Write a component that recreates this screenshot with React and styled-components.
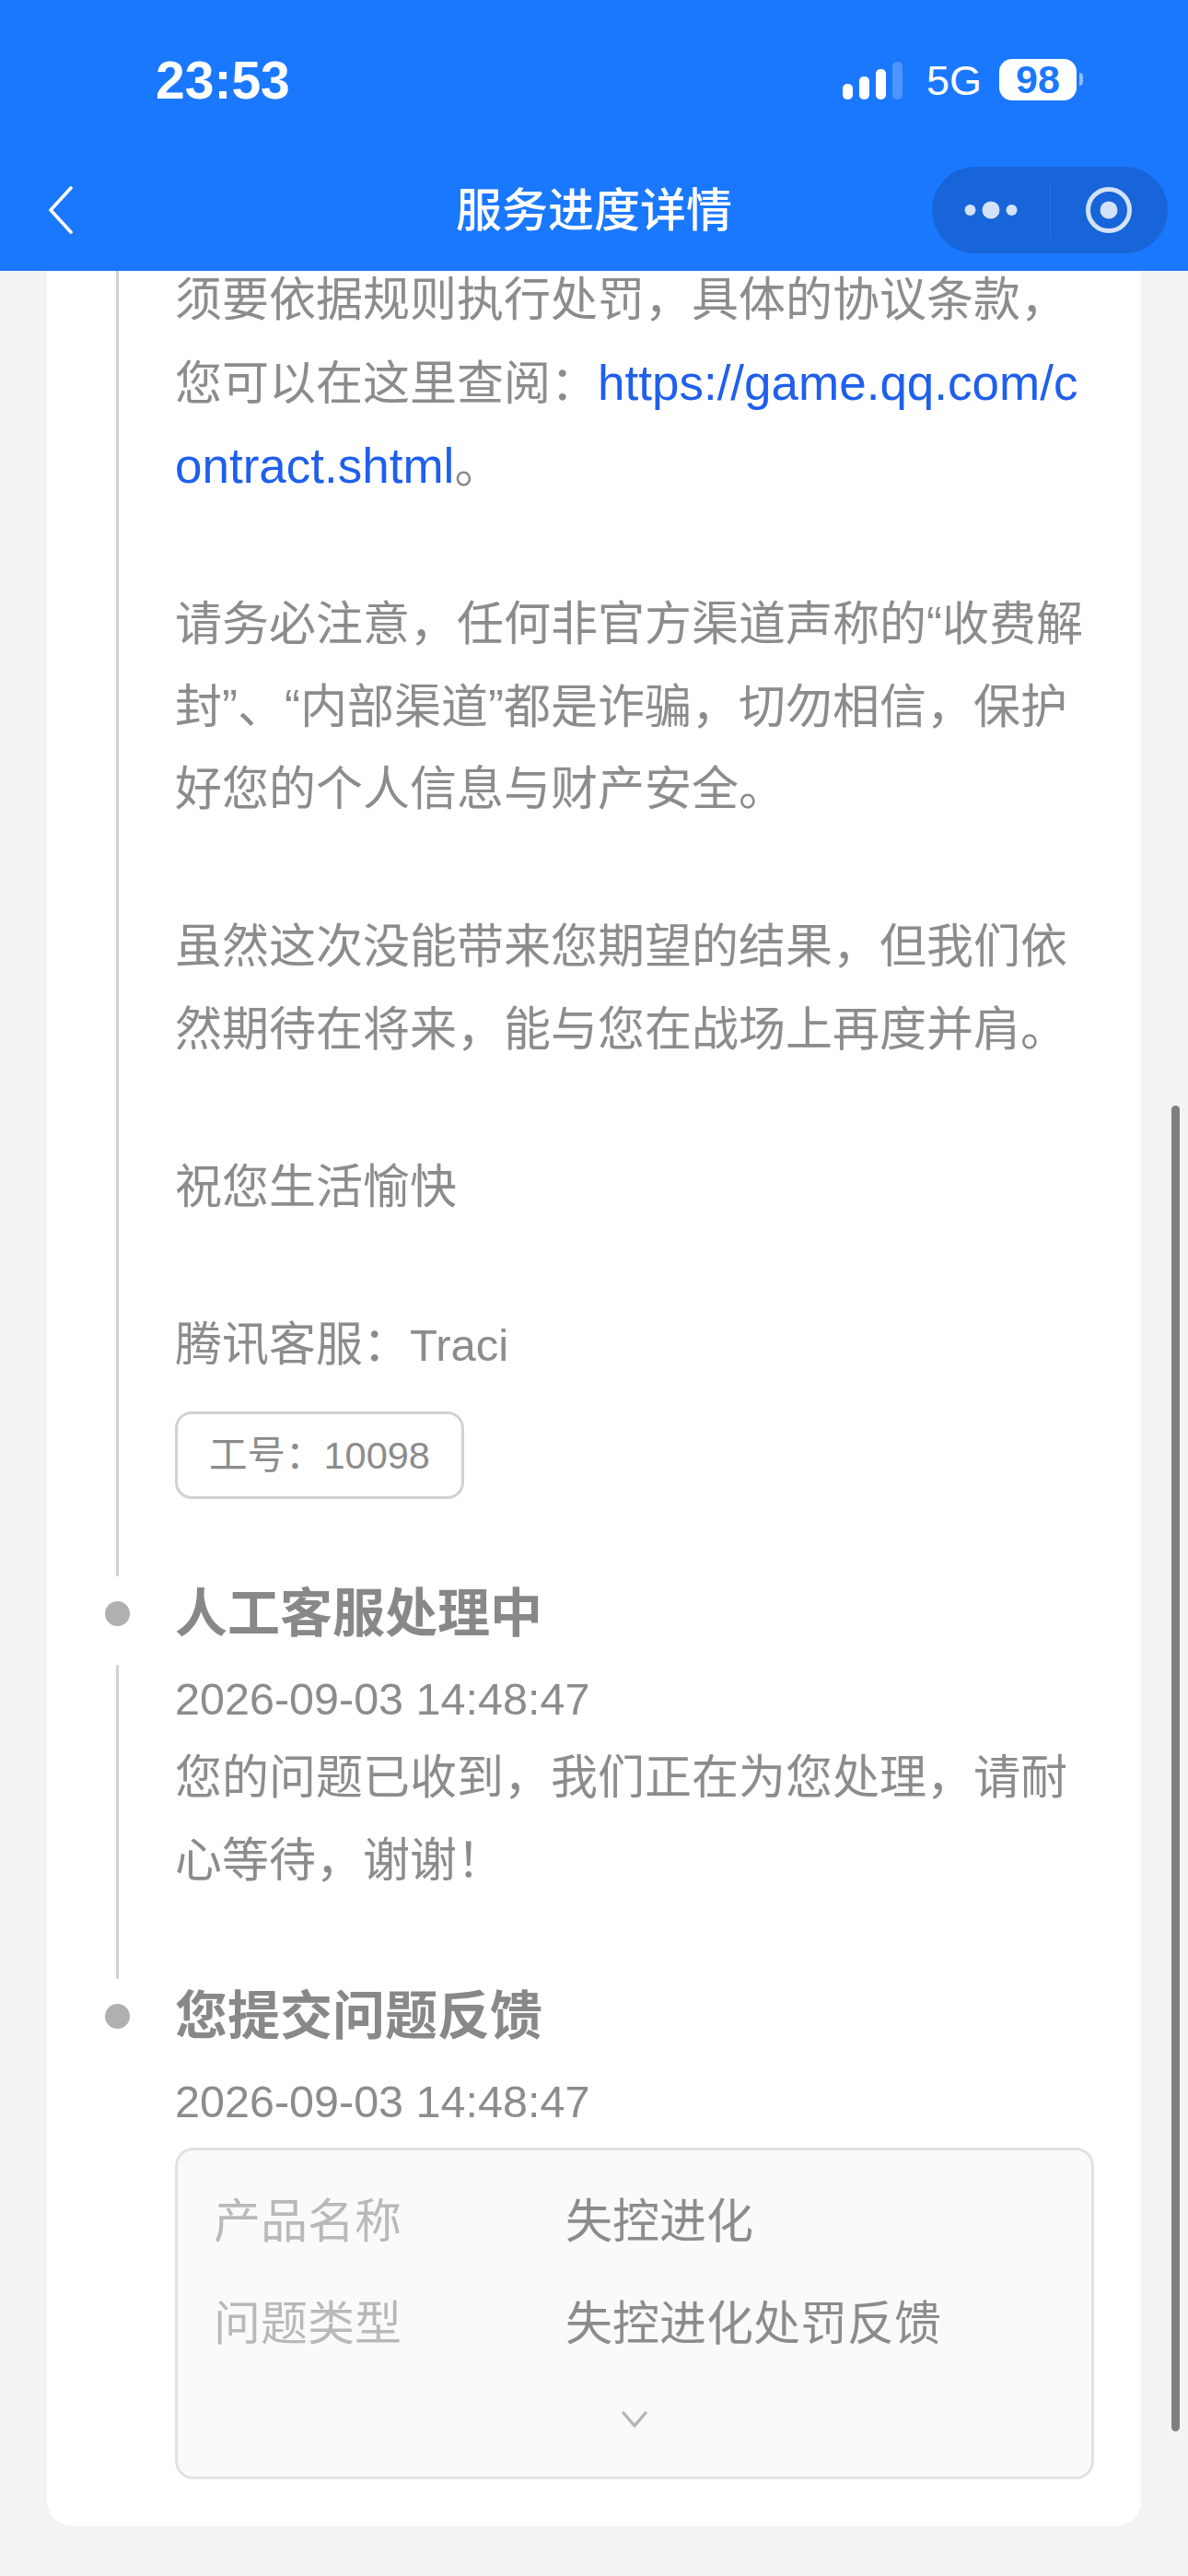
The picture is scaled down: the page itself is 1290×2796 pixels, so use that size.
import React from "react";
import styled, { createGlobalStyle } from "styled-components";

const FONT = `"Liberation Sans", "Noto Sans CJK SC", sans-serif`;

const GlobalStyle = createGlobalStyle`
  html, body { margin: 0; padding: 0; background: #f3f3f3; }
  #root { width: 1290px; height: 2796px; overflow: hidden; }
`;

function App() {
  return (
    <Page>
      <GlobalStyle />
      <Header>
        <StatusBar>
          <Time>23:53</Time>
          <StatusIcons>
            <Signal>
              <Bar $h={17} />
              <Bar $h={25} />
              <Bar $h={33} />
              <Bar $h={41} $dim />
            </Signal>
            <Network>5G</Network>
            <Battery>
              <BatteryBody>98</BatteryBody>
              <BatteryCap />
            </Battery>
          </StatusIcons>
        </StatusBar>
        <NavBar>
          <BackButton>
            <svg width="27" height="52" viewBox="0 0 27 52" fill="none">
              <path d="M25 2 L3 26 L25 50" stroke="#fff" strokeWidth="3.6" strokeLinecap="round" strokeLinejoin="round" />
            </svg>
          </BackButton>
          <NavTitle>服务进度详情</NavTitle>
          <Capsule>
            <CapsuleSide>
              <svg width="64" height="24" viewBox="0 0 64 24">
                <circle cx="9.5" cy="12" r="6" fill="#d3e2f8" />
                <circle cx="32" cy="12" r="9.5" fill="#d3e2f8" />
                <circle cx="54.5" cy="12" r="6" fill="#d3e2f8" />
              </svg>
            </CapsuleSide>
            <CapsuleDivider />
            <CapsuleSide>
              <svg width="52" height="52" viewBox="0 0 52 52" fill="none">
                <circle cx="26" cy="26" r="22.5" stroke="#d3e2f8" strokeWidth="5" />
                <circle cx="26" cy="26" r="9.5" fill="#d3e2f8" />
              </svg>
            </CapsuleSide>
          </Capsule>
        </NavBar>
      </Header>

      <Viewport>
        <Card>
          <Item>
            <Rail $noDot>
              <RailLine />
            </Rail>
            <ItemBody>
              <Paragraph>须要依据规则执行处罚，具体的协议条款，您可以在这里查阅：<Link>https://game.qq.com/contract.shtml</Link>。</Paragraph>
              <Paragraph>请务必注意，任何非官方渠道声称的“收费解封”、“内部渠道”都是诈骗，切勿相信，保护好您的个人信息与财产安全。</Paragraph>
              <Paragraph>虽然这次没能带来您期望的结果，但我们依然期待在将来，能与您在战场上再度并肩。</Paragraph>
              <Paragraph>祝您生活愉快</Paragraph>
              <Paragraph $last>腾讯客服：<AgentName>Traci</AgentName></Paragraph>
              <StaffTag>工号：10098</StaffTag>
            </ItemBody>
          </Item>

          <Item>
            <Rail>
              <RailDot />
              <RailLine />
            </Rail>
            <ItemBody>
              <ItemTitle>人工客服处理中</ItemTitle>
              <ItemDate>2026-09-03 14:48:47</ItemDate>
              <Paragraph $last>您的问题已收到，我们正在为您处理，请耐心等待，谢谢！</Paragraph>
            </ItemBody>
          </Item>

          <Item $end>
            <Rail>
              <RailDot />
            </Rail>
            <ItemBody $end>
              <ItemTitle>您提交问题反馈</ItemTitle>
              <ItemDate>2026-09-03 14:48:47</ItemDate>
              <InfoBox>
                <InfoRow>
                  <InfoLabel>产品名称</InfoLabel>
                  <InfoValue>失控进化</InfoValue>
                </InfoRow>
                <InfoRow>
                  <InfoLabel>问题类型</InfoLabel>
                  <InfoValue>失控进化处罚反馈</InfoValue>
                </InfoRow>
                <MoreRow>
                  <svg width="30" height="20" viewBox="0 0 30 20" fill="none">
                    <path d="M3 3 L15 17 L27 3" stroke="#b4b4b4" strokeWidth="3.4" strokeLinecap="round" strokeLinejoin="round" />
                  </svg>
                </MoreRow>
              </InfoBox>
            </ItemBody>
          </Item>
        </Card>
        <ScrollThumb />
      </Viewport>
    </Page>
  );
}

export default App;

const Page = styled.div`
  width: 1290px;
  height: 2796px;
  display: flex;
  flex-direction: column;
  background: #f3f3f3;
  font-family: ${FONT};
`;

const Header = styled.header`
  position: relative;
  z-index: 1;
  height: 294px;
  flex-shrink: 0;
  background: #1a78ff;
  color: #fff;
`;

const StatusBar = styled.div`
  height: 178px;
  box-sizing: border-box;
  padding: 58px 114px 0 169px;
  display: flex;
  justify-content: space-between;
  align-items: flex-start;
`;

const Time = styled.div`
  font-size: 57px;
  line-height: 58px;
  font-weight: 700;
`;

const StatusIcons = styled.div`
  display: flex;
  align-items: center;
  height: 58px;
  margin-top: -1px;
`;

const Signal = styled.div`
  display: flex;
  align-items: flex-end;
  gap: 7px;
  height: 41px;
  margin-right: 26px;
  padding-top: 3px;
`;

const Bar = styled.span`
  width: 11px;
  height: ${(p) => p.$h}px;
  border-radius: 5px;
  background: ${(p) => (p.$dim ? "#4d95ff" : "#fff")};
`;

const Network = styled.div`
  font-size: 45px;
  line-height: 58px;
  padding-top: 4px;
  margin-right: 24px;
  width: 55px;
`;

const Battery = styled.div`
  display: flex;
  align-items: center;
  gap: 3px;
`;

const BatteryBody = styled.div`
  width: 84px;
  height: 45px;
  border-radius: 14px;
  background: #fff;
  color: #1a78ff;
  font-size: 43px;
  line-height: 45px;
  font-weight: 700;
  text-align: center;
`;

const BatteryCap = styled.span`
  width: 4px;
  height: 14px;
  border-radius: 0 4px 4px 0;
  background: #8fbcff;
`;

const NavBar = styled.nav`
  height: 116px;
  box-sizing: border-box;
  padding: 3px 22px 19px 22px;
  display: grid;
  grid-template-columns: 1fr auto 1fr;
  align-items: center;
`;

const BackButton = styled.div`
  display: flex;
  align-items: center;
  margin-left: 30px;
`;

const NavTitle = styled.h1`
  margin: 2px 0 0;
  font-size: 50px;
  line-height: 60px;
  font-weight: 500;
`;

const Capsule = styled.div`
  justify-self: end;
  width: 256px;
  height: 94px;
  border-radius: 47px;
  background: #1765d8;
  display: flex;
  align-items: center;
`;

const CapsuleSide = styled.div`
  flex: 1;
  display: flex;
  align-items: center;
  justify-content: center;
`;

const CapsuleDivider = styled.span`
  width: 1px;
  height: 60px;
  background: #2a72de;
`;

const Viewport = styled.main`
  position: relative;
  flex: 1;
  overflow: hidden;
  padding: 0 51px;
`;

const Card = styled.section`
  margin-top: -13px;
  background: #fff;
  border-radius: 0 0 28px 28px;
  padding: 0 51px 0 63px;
`;

const Item = styled.article`
  display: flex;
  padding-bottom: ${(p) => (p.$end ? 51 : 0)}px;
`;

const Rail = styled.div`
  width: 27px;
  margin-right: 49px;
  flex-shrink: 0;
  display: flex;
  flex-direction: column;
  align-items: center;
  padding-top: ${(p) => (p.$noDot ? 0 : 26.5)}px;
`;

const RailDot = styled.span`
  width: 27px;
  height: 27px;
  flex-shrink: 0;
  border-radius: 50%;
  background: #b0b0b0;
  margin-bottom: 42.5px;
`;

const RailLine = styled.span`
  width: 3px;
  flex: 1;
  background: #d2d2d2;
`;

const ItemBody = styled.div`
  flex: 1;
  min-width: 0;
  padding-bottom: ${(p) => (p.$end ? 0 : 84)}px;
`;

const Paragraph = styled.p`
  margin: 0 0 ${(p) => (p.$last ? 0 : 81.5)}px;
  font-size: 51px;
  line-height: 89.5px;
  color: #8c8c8c;
  word-break: break-all;
`;

const Link = styled.span`
  font-size: 53px;
  color: #1f5fec;
`;

const AgentName = styled.span`
  font-size: 49px;
`;

const StaffTag = styled.div`
  width: fit-content;
  margin-top: 27px;
  height: 95px;
  box-sizing: border-box;
  padding: 0 34px;
  border: 3px solid #d2d2d2;
  border-radius: 18px;
  font-size: 41.5px;
  line-height: 89px;
  color: #8c8c8c;
`;

const ItemTitle = styled.h2`
  margin: 0;
  font-size: 57px;
  line-height: 80px;
  font-weight: 700;
  color: #888;
`;

const ItemDate = styled.div`
  margin: 18px 0 6px;
  font-size: 48.5px;
  line-height: 70px;
  color: #8c8c8c;
`;

const InfoBox = styled.div`
  margin-top: 14.5px;
  height: 360px;
  box-sizing: border-box;
  padding-top: 22px;
  border: 3px solid #e2e2e2;
  border-radius: 20px;
  background: #fafafa;
`;

const InfoRow = styled.div`
  display: flex;
  height: 111px;
  padding-left: 39px;
  font-size: 51px;
  line-height: 111px;
`;

const InfoLabel = styled.span`
  width: 382px;
  color: #b9b9b9;
`;

const InfoValue = styled.span`
  color: #8c8c8c;
`;

const MoreRow = styled.div`
  height: 96px;
  display: flex;
  align-items: center;
  justify-content: center;
`;

const ScrollThumb = styled.div`
  position: absolute;
  top: 906px;
  left: 1272px;
  width: 9px;
  height: 1439px;
  border-radius: 5px;
  background: #7f7f7f;
`;
